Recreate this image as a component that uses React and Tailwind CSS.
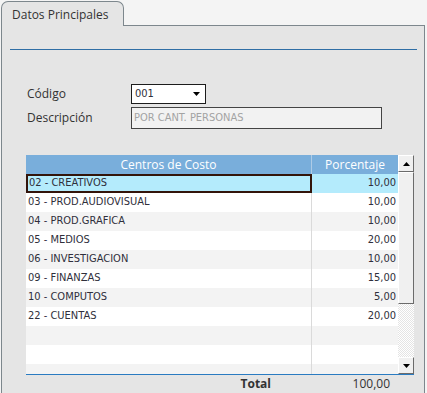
import React from 'react';

const rows = [
  { name: '02 - CREATIVOS', pct: '10,00' },
  { name: '03 - PROD.AUDIOVISUAL', pct: '10,00' },
  { name: '04 - PROD.GRAFICA', pct: '10,00' },
  { name: '05 - MEDIOS', pct: '20,00' },
  { name: '06 - INVESTIGACION', pct: '10,00' },
  { name: '09 - FINANZAS', pct: '15,00' },
  { name: '10 - COMPUTOS', pct: '5,00' },
  { name: '22 - CUENTAS', pct: '20,00' },
  { name: '', pct: '' },
  { name: '', pct: '' },
  { name: '', pct: '' },
];

function Arrow({ up }) {
  return (
    <svg width="7" height="4" viewBox="0 0 7 4">
      <polygon points={up ? '0,4 7,4 3.5,0' : '0,0 7,0 3.5,4'} fill="#000" />
    </svg>
  );
}

function ScrollButton({ up }) {
  return (
    <div className="h-[17px] flex items-center justify-center bg-[#f0f0f0] border border-t-white border-l-white border-r-[#6b6b6b] border-b-[#6b6b6b]">
      <Arrow up={up} />
    </div>
  );
}

export default function App() {
  const grid = "font-['DejaVu_Sans_Condensed','DejaVu_Sans',sans-serif] font-stretch-condensed text-[11px] text-[#2f2f3b]";

  return (
    <div className="w-[427px] h-[393px] overflow-hidden bg-[#f4f4f4] pt-px pl-px font-['Open_Sans',sans-serif] text-[#333]">
      {/* Tab */}
      <div className="relative z-10 -mb-px w-[123px] h-[25px] border border-b-0 border-[#7d878d] rounded-t-[7px] bg-[#e5e5e5] pl-[10px] text-[12px] leading-[26px]">
        Datos Principales
      </div>

      {/* Panel */}
      <div className="w-[424px] h-[368px] border-x border-t border-[#7d878d] bg-[#e5e5e5]">
        <div className="mt-[23px] ml-[8px] w-[407px] h-px bg-[#2f6ea5]" />

        <div className="mt-[34px] pl-[25px]">
          <div className="flex items-center h-[20px]">
            <div className="w-[104px] text-[12px]">Código</div>
            <div className={`w-[75px] h-[20px] bg-white border border-[#1c1c1c] flex items-center justify-between pl-[3px] pr-[5px] ${grid} text-[#1a1a1a]`}>
              <span>001</span>
              <Arrow />
            </div>
          </div>
          <div className="flex items-center h-[22px] mt-[3px]">
            <div className="w-[104px] text-[12px]">Descripción</div>
            <div className={`w-[251px] h-[22px] bg-[#f2f2f2] border border-[#444] flex items-center pl-[2px] ${grid} text-[10px] text-[#a3a3a3]`}>
              POR CANT. PERSONAS
            </div>
          </div>
        </div>

        {/* Grid */}
        <div className="mt-[26px] ml-[24px] w-[388px]">
          <div className="flex">
            <div className="w-[372px]">
              <div className="flex h-[19px] bg-[#79aedb] text-white text-[12px] leading-[19px]">
                <div className="w-[286px] text-center border-r border-[#aecbe6]">Centros de Costo</div>
                <div className="flex-1 text-center">Porcentaje</div>
              </div>
              <div className={`h-[200px] overflow-hidden ${grid}`}>
                {rows.map((r, i) => {
                  const selected = i === 0;
                  const bg = selected ? 'bg-[#b4ebfc]' : i % 2 === 0 ? 'bg-[#f3f3f3]' : 'bg-white';
                  return (
                    <div key={i} className={`flex h-[19px] ${bg}`}>
                      <div
                        className={`w-[286px] flex items-center ${
                          selected ? 'border-2 border-[#33140a] pl-[1px]' : 'border-r border-[#dadada] pl-[2px]'
                        }`}
                      >
                        {r.name}
                      </div>
                      <div className="flex-1 flex items-center justify-end pr-[2px]">{r.pct}</div>
                    </div>
                  );
                })}
              </div>
            </div>
            <div className="w-[16px] flex flex-col">
              <ScrollButton up />
              <div className="h-[132px] bg-[#f0f0f0] border border-t-white border-l-white border-r-[#6b6b6b] border-b-[#6b6b6b]" />
              <div className="flex-1 bg-[repeating-conic-gradient(#ffffff_0_25%,#e4e4e4_0_50%)] bg-[length:2px_2px]" />
              <ScrollButton />
            </div>
          </div>
          <div className="h-px bg-[#2a7bc1]" />
          <div className="flex h-[18px] items-center text-[12px]">
            <div className="w-[286px] text-right pr-[41px] font-bold">Total</div>
            <div className="w-[86px] text-right pr-[8px]">100,00</div>
          </div>
        </div>
      </div>
    </div>
  );
}
